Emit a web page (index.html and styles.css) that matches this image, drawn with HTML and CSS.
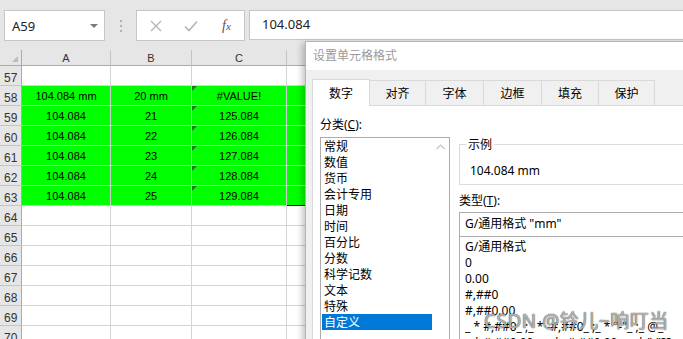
FILE: index.html
```html
<!DOCTYPE html>
<html lang="zh-CN">
<head>
<meta charset="utf-8">
<title>设置单元格格式</title>
<link rel="stylesheet" href="styles.css">
</head>
<body>
<div class="toolbar">
  <div class="namebox"><span class="nb-text">A59</span><span class="caret"></span></div>
  <div class="grip"><i></i><i></i><i></i></div>
  <div class="fxbtns">
    <svg class="ico" width="12" height="12" viewBox="0 0 12 12"><path d="M1 1 L11 11 M11 1 L1 11" stroke="#b4b4b4" stroke-width="1.3" fill="none"/></svg>
    <svg class="ico" width="14" height="12" viewBox="0 0 14 12"><path d="M1 6.5 L5 10.5 L13 1.5" stroke="#b4b4b4" stroke-width="1.6" fill="none"/></svg>
    <span class="fx"><i>f</i><i class="x">x</i></span>
  </div>
  <div class="formula">104.084</div>
</div>

<div class="sheet">
  <div class="corner"><span class="tri"></span></div>
  <div class="ch">A</div><div class="ch">B</div><div class="ch">C</div><div class="ch"></div>

  <div class="rh">57</div><div class="c"></div><div class="c"></div><div class="c"></div><div class="c"></div>

  <div class="rh">58</div><div class="c g">104.084 mm</div><div class="c g">20 mm</div><div class="c g err">#VALUE!</div><div class="c g"></div>
  <div class="rh">59</div><div class="c g">104.084</div><div class="c g">21</div><div class="c g err">125.084</div><div class="c g"></div>
  <div class="rh">60</div><div class="c g">104.084</div><div class="c g">22</div><div class="c g err">126.084</div><div class="c g"></div>
  <div class="rh">61</div><div class="c g">104.084</div><div class="c g">23</div><div class="c g err">127.084</div><div class="c g"></div>
  <div class="rh">62</div><div class="c g">104.084</div><div class="c g">24</div><div class="c g err">128.084</div><div class="c g"></div>
  <div class="rh">63</div><div class="c g">104.084</div><div class="c g">25</div><div class="c g err">129.084</div><div class="c g sel"></div>

  <div class="rh">64</div><div class="c"></div><div class="c"></div><div class="c"></div><div class="c"></div>
  <div class="rh">65</div><div class="c"></div><div class="c"></div><div class="c"></div><div class="c"></div>
  <div class="rh">66</div><div class="c"></div><div class="c"></div><div class="c"></div><div class="c"></div>
  <div class="rh">67</div><div class="c"></div><div class="c"></div><div class="c"></div><div class="c"></div>
  <div class="rh">68</div><div class="c"></div><div class="c"></div><div class="c"></div><div class="c"></div>
  <div class="rh">69</div><div class="c"></div><div class="c"></div><div class="c"></div><div class="c"></div>
  <div class="rh">70</div><div class="c"></div><div class="c"></div><div class="c"></div><div class="c"></div>
</div>

<div class="dialog">
  <div class="title">设置单元格格式</div>
  <div class="dbody">
    <div class="tabs">
      <div class="tab active w58">数字</div>
      <div class="tab w56">对齐</div>
      <div class="tab w58">字体</div>
      <div class="tab w58">边框</div>
      <div class="tab w57">填充</div>
      <div class="tab w56">保护</div>
    </div>
    <div class="panel">
      <div class="leftcol">
        <div class="lbl">分类(<u>C</u>):</div>
        <div class="listbox">
          <div class="items">
            <div class="it">常规</div>
            <div class="it">数值</div>
            <div class="it">货币</div>
            <div class="it">会计专用</div>
            <div class="it">日期</div>
            <div class="it">时间</div>
            <div class="it">百分比</div>
            <div class="it">分数</div>
            <div class="it">科学记数</div>
            <div class="it">文本</div>
            <div class="it">特殊</div>
            <div class="it selected">自定义</div>
          </div>
          <div class="vscroll">
            <svg width="9" height="6" viewBox="0 0 9 6"><path d="M0.5 5 L4.5 1 L8.5 5" stroke="#c2c2c2" stroke-width="1.1" fill="none"/></svg>
          </div>
        </div>
      </div>
      <div class="rightcol">
        <fieldset class="sample">
          <legend>示例</legend>
          <div class="sample-val">104.084 mm</div>
        </fieldset>
        <div class="lbl type-lbl">类型(<u>T</u>):</div>
        <div class="typebox">G/通用格式 "mm"</div>
        <div class="typelist">
          <div class="tl">G/通用格式</div>
          <div class="tl">0</div>
          <div class="tl">0.00</div>
          <div class="tl">#,##0</div>
          <div class="tl">#,##0.00</div>
          <div class="tl">_ * #,##0_ ;_ * -#,##0_ ;_ * "-"_ ;_ @_ </div>
          <div class="tl">_ * #,##0.00_ ;_ * -#,##0.00_ ;_ * "-"??_ ;_ @_ </div>
        </div>
      </div>
    </div>
  </div>
</div>

<div class="watermark">CSDN @铃儿~响叮当</div>
</body>
</html>
```
FILE: styles.css
```css
html, body {
  margin: 0;
  padding: 0;
}
body {
  width: 683px;
  height: 339px;
  overflow: hidden;
  position: relative;
  background: #ffffff;
  font-family: "Noto Sans", "Noto Sans CJK SC", sans-serif;
}

/* ---------- toolbar ---------- */
.toolbar {
  height: 50px;
  box-sizing: border-box;
  background: #e6e6e6;
  display: flex;
  align-items: flex-start;
  padding: 10px 0 0 4px;
}
.namebox {
  width: 101px;
  height: 31px;
  box-sizing: border-box;
  background: #fff;
  border: 1px solid #c6c6c6;
  display: flex;
  align-items: center;
  justify-content: space-between;
  padding: 0 6px 0 7px;
}
.nb-text {
  font-size: 13px;
  color: #222;
  line-height: 16px;
}
.caret {
  width: 0;
  height: 0;
  border-left: 4px solid transparent;
  border-right: 4px solid transparent;
  border-top: 4px solid #7a7a7a;
}
.grip {
  width: 31px;
  height: 31px;
  display: flex;
  flex-direction: column;
  align-items: center;
  justify-content: center;
  gap: 3px;
}
.grip i {
  display: block;
  width: 2px;
  height: 2px;
  background: #b0b0b0;
}
.fxbtns {
  width: 109px;
  height: 31px;
  box-sizing: border-box;
  background: #fff;
  border: 1px solid #c6c6c6;
  display: flex;
  align-items: center;
  padding-left: 13px;
}
.fxbtns .ico:nth-child(2) {
  margin-left: 22px;
}
.fx {
  margin-left: 24px;
  font-family: "Liberation Serif", "DejaVu Serif", serif;
  font-size: 14px;
  color: #555;
  line-height: 16px;
}
.fx .x {
  font-size: 11px;
}
.formula {
  margin-left: 4px;
  flex: 1;
  height: 30px;
  box-sizing: border-box;
  background: #fff;
  border: 1px solid #c6c6c6;
  border-right: none;
  font-size: 13px;
  line-height: 26px;
  padding-left: 12px;
  color: #222;
}

/* ---------- sheet ---------- */
.sheet {
  display: grid;
  grid-template-columns: 22px 89px 81px 95px 1fr;
  grid-auto-rows: 20px;
  grid-template-rows: 16px;
  font-family: "Liberation Sans", Arial, sans-serif;
  font-size: 11px;
  color: #000;
}
.corner, .ch {
  background: #e6e6e6;
  border-bottom: 1px solid #ababab;
  border-right: 1px solid #c4c4c4;
  box-sizing: border-box;
}
.corner {
  position: relative;
  border-right-color: #ababab;
}
.corner .tri {
  position: absolute;
  right: 3px;
  bottom: 3px;
  width: 0;
  height: 0;
  border-left: 6px solid transparent;
  border-bottom: 6px solid #bcbcbc;
}
.ch {
  text-align: center;
  line-height: 16px;
  color: #333;
}
.rh {
  background: #e6e6e6;
  border-right: 1px solid #ababab;
  border-bottom: 1px solid #c4c4c4;
  box-sizing: border-box;
  font-family: "Liberation Sans Narrow", "Liberation Sans", sans-serif;
  font-size: 12px;
  color: #333;
  padding-left: 4px;
  line-height: 24px;
  overflow: hidden;
}
.c {
  border-right: 1px solid #d4d4d4;
  border-bottom: 1px solid #d4d4d4;
  box-sizing: border-box;
  text-align: center;
  line-height: 21px;
  white-space: nowrap;
  overflow: hidden;
}
.c.g {
  background: #00ff00;
  border-color: #cfcfcf;
}
.c.err {
  position: relative;
}
.c.err::before {
  content: "";
  position: absolute;
  left: 0;
  top: 0;
  width: 0;
  height: 0;
  border-top: 5px solid #1e7a1e;
  border-right: 5px solid transparent;
}
.c.sel {
  border-bottom: 1px solid #111;
}

/* ---------- dialog ---------- */
.dialog {
  position: absolute;
  left: 305px;
  top: 41px;
  width: 420px;
  height: 330px;
  background: #f0f0f0;
  border: 1px solid #b4b4b4;
  box-shadow: -3px 2px 6px rgba(0, 0, 0, 0.22);
  font-family: "Noto Sans", "Noto Sans CJK SC", sans-serif;
  font-size: 12px;
  color: #000;
}
.title {
  height: 28px;
  background: #fff;
  color: #9a9a9a;
  line-height: 28px;
  padding-left: 7px;
  font-size: 12px;
}
.dbody {
  padding: 9px 0 0 6px;
}
.tabs {
  display: flex;
  align-items: flex-end;
  height: 26px;
  position: relative;
  z-index: 1;
}
.tab {
  box-sizing: border-box;
  height: 25px;
  border: 1px solid #d9d9d9;
  border-left: none;
  border-bottom: none;
  background: #f0f0f0;
  text-align: center;
  line-height: 24px;
  font-family: "Noto Sans CJK SC", sans-serif;
}
.tab.active {
  height: 27px;
  margin-bottom: -1px;
  background: #fff;
  border-left: 1px solid #d9d9d9;
  line-height: 26px;
}
.w58 { width: 58px; }
.w57 { width: 57px; }
.w56 { width: 56px; }

.panel {
  background: #fff;
  border: 1px solid #d9d9d9;
  height: 260px;
  box-sizing: border-box;
  padding: 11px 0 0 7px;
  display: flex;
}
.lbl {
  line-height: 16px;
  height: 16px;
  font-family: "Noto Sans", "Noto Sans CJK SC", sans-serif;
}
.leftcol {
  width: 130px;
  flex: none;
}
.listbox {
  margin-top: 4px;
  height: 220px;
  box-sizing: border-box;
  border: 1px solid #adadad;
  display: flex;
}
.items {
  width: 110px;
  padding-left: 1px;
  font-family: "Noto Sans CJK SC", sans-serif;
}
.it {
  height: 16px;
  line-height: 16px;
  padding-left: 2px;
  white-space: nowrap;
}
.it.selected {
  background: #0078d7;
  color: #fff;
}
.vscroll {
  flex: 1;
  display: flex;
  justify-content: center;
  padding-top: 6px;
  align-items: flex-start;
}
.rightcol {
  margin-left: 9px;
  flex: 1;
  min-width: 0;
}
.sample {
  margin: 19px 0 0 0;
  padding: 11px 0 5px 10px;
  border: 1px solid #dcdcdc;
  min-width: 0;
}
.sample legend {
  padding: 0 2px;
  margin-left: -4px;
  line-height: 16px;
  font-family: "Noto Sans CJK SC", sans-serif;
}
.sample-val {
  line-height: 16px;
}
.type-lbl {
  margin-top: 8px;
}
.typebox {
  margin-top: 3px;
  height: 25px;
  box-sizing: border-box;
  border: 1px solid #adadad;
  border-right: none;
  line-height: 22px;
  padding-left: 5px;
  white-space: nowrap;
}
.typelist {
  margin-top: -1px;
  height: 120px;
  border-left: 1px solid #adadad;
  border-top: 1px solid #adadad;
  padding: 2px 0 0 5px;
  white-space: nowrap;
  overflow: hidden;
}
.tl {
  height: 16px;
  line-height: 16px;
  white-space: pre;
}

.watermark {
  position: absolute;
  left: 484px;
  top: 309px;
  font-family: "Noto Sans", "Noto Sans CJK SC", sans-serif;
  font-size: 19px;
  line-height: 24px;
  color: rgba(255, 255, 255, 0.6);
  text-shadow: 0 0 1px rgba(60, 60, 60, 0.9), 0 0 1px rgba(60, 60, 60, 0.9);
  letter-spacing: 0.5px;
  white-space: nowrap;
}
```
